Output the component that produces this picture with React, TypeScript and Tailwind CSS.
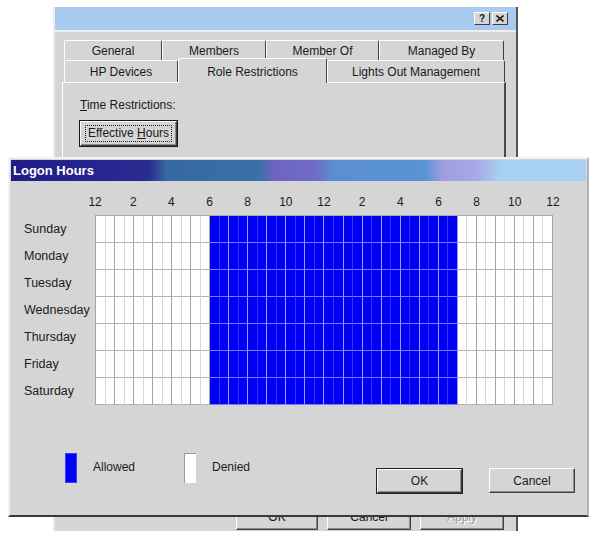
import clsx from "clsx";

const hourLabels = ["12", "2", "4", "6", "8", "10", "12", "2", "4", "6", "8", "10", "12"];
const days = ["Sunday", "Monday", "Tuesday", "Wednesday", "Thursday", "Friday", "Saturday"];

// half-hour slots; 6:00 .. 19:00 are allowed
const isAllowed = (col: number) => col >= 12 && col < 38;

function cellClass(col: number) {
    const hourEnd = col % 2 === 1;
    if (isAllowed(col)) {
        return clsx(
            "h-[27px] bg-[#0000f4] border-b border-r border-b-[#7c7cff]",
            hourEnd ? "border-r-[#9a9aff]" : "border-r-[#3434ff]"
        );
    }
    return clsx(
        "h-[27px] bg-white border-b border-r border-b-[#b2b2b2]",
        hourEnd ? "border-r-[#a6a6a6]" : "border-r-[#d6d6d6]"
    );
}

function Button({children, className, isDefault, disabled}: {
    children: React.ReactNode;
    className?: string;
    isDefault?: boolean;
    disabled?: boolean;
}) {
    return (
        <div className={clsx("bg-[#d5d5d5]", isDefault && "border border-[#202020]", className)}>
            <div className="w-full h-full flex items-center justify-center border border-t-white border-l-white border-r-[#404040] border-b-[#404040] shadow-[inset_-1px_-1px_0_#8a8a8a]">
                <span className={clsx("text-[12px] leading-[14px]", disabled ? "text-[#9a9a9a] [text-shadow:1px_1px_0_#ffffff]" : "text-[#1a1a1a]")}>
                    {children}
                </span>
            </div>
        </div>
    );
}

function Tab({label, width, height, className}: { label: string; width: string; height: string; className?: string }) {
    return (
        <div className={clsx(width, height, "flex items-center justify-center bg-[#d5d5d5] border-t border-l border-t-white border-l-white border-r border-r-[#404040] rounded-tl-[2px] rounded-tr-[2px] text-[12px] text-[#1a1a1a]", className)}>
            {label}
        </div>
    );
}

function BackDialog() {
    return (
        <div className="absolute left-[53px] top-[7px] w-[465px] h-[524px] overflow-hidden bg-[#d5d5d5] border-l-2 border-l-[#ececec] border-r-2 border-r-[#555555] flex flex-col">
            <div className="h-[23px] bg-[#a8caef] flex items-center justify-end pr-[8px] gap-[2px]">
                <div className="w-[16px] h-[13px] bg-[#d5d5d5] border border-t-white border-l-white border-r-[#404040] border-b-[#404040] flex items-center justify-center text-[10px] font-bold leading-none text-[#202020]">?</div>
                <div className="w-[16px] h-[13px] bg-[#d5d5d5] border border-t-white border-l-white border-r-[#404040] border-b-[#404040] flex items-center justify-center">
                    <svg width="8" height="7" viewBox="0 0 8 7">
                        <path d="M0.5 0.5 L7.5 6.5 M7.5 0.5 L0.5 6.5" stroke="#202020" strokeWidth="1.6"/>
                    </svg>
                </div>
            </div>
            <div className="h-[2px] bg-[#efefef]"/>
            <div className="flex-1 flex flex-col pl-[7px] pr-[10px] pt-[8px]">
                <div className="flex h-[20px] ml-[2px]">
                    <Tab label="General" width="w-[98px]" height="h-[20px]"/>
                    <Tab label="Members" width="w-[104px]" height="h-[20px]"/>
                    <Tab label="Member Of" width="w-[113px]" height="h-[20px]"/>
                    <Tab label="Managed By" width="w-[125px]" height="h-[20px]"/>
                </div>
                <div className="flex items-end h-[22px] ml-[2px]">
                    <Tab label="HP Devices" width="w-[114px]" height="h-[22px]"/>
                    <div className="w-[149px] h-[25px] mb-[-1px] relative z-10 flex justify-center pt-[4px] bg-[#d5d5d5] border-t border-l border-t-white border-l-white border-r border-r-[#404040] rounded-tl-[2px] rounded-tr-[2px] text-[12px] text-[#1a1a1a]">
                        Role Restrictions
                    </div>
                    <Tab label="Lights Out Management" width="w-[178px]" height="h-[22px]"/>
                </div>
                <div className="flex-1 border-t border-l border-t-white border-l-white border-r-2 border-r-[#4a4a4a] pl-[17px] pt-[15px]">
                    <div className="text-[12px] leading-[14px] text-[#1a1a1a]">
                        <span className="underline">T</span>ime Restrictions:
                    </div>
                    <div className="mt-[8px] ml-[-1px] w-[99px] h-[27px] border border-[#1a1a1a]">
                        <div className="w-full h-full flex items-center justify-center border border-t-white border-l-white border-r-[#404040] border-b-[#404040] shadow-[inset_-1px_-1px_0_#8a8a8a]">
                            <span className="border border-dotted border-[#1a1a1a] px-[2px] text-[12px] leading-[15px] text-[#1a1a1a]">
                                Effective <span className="underline">H</span>ours
                            </span>
                        </div>
                    </div>
                </div>
            </div>
            <div className="flex h-[27px] mt-[6px] pl-[181px] gap-[9px]">
                <Button className="w-[82px] h-[26px] shrink-0">OK</Button>
                <Button className="w-[84px] h-[26px] shrink-0">Cancel</Button>
                <Button className="w-[84px] h-[26px] shrink-0" disabled>Apply</Button>
            </div>
        </div>
    );
}

function LogonHours() {
    return (
        <div className="absolute left-[8px] top-[157px] w-[581px] h-[360px] bg-[#d5d5d5] border-2 border-t-[#f2f2f2] border-l-[#f2f2f2] border-r-[#b4b4b4] border-b-[#3a3a3a] flex flex-col">
            <div className="mx-px mt-px h-[21px] flex items-center pl-[2px] bg-[linear-gradient(to_right,#1e1e86_0%,#2a2c92_24%,#3668a2_27%,#3a70a8_43%,#7064c0_46%,#6e6cc4_53%,#5a8ed2_56%,#5a92d6_72%,#9c9ee0_75%,#a8a8e6_81%,#a8d0f2_85%,#a8d0f2_100%)]">
                <span className="text-white font-bold text-[13px] leading-none">Logon Hours</span>
            </div>

            <div className="flex mt-[14px] h-[14px]">
                <div className="w-[66px] shrink-0"/>
                {hourLabels.map((h, i) => (
                    <div key={i} className="w-[38.17px] shrink-0 text-center text-[12px] leading-[14px] text-[#1a1a1a]">{h}</div>
                ))}
            </div>

            <div className="flex mt-[6px]">
                <div className="w-[85px] shrink-0 pl-[14px] pt-px flex flex-col">
                    {days.map((d) => (
                        <div key={d} className="h-[27px] flex items-center text-[12.5px] text-[#1a1a1a]">{d}</div>
                    ))}
                </div>
                <div className="w-[458px] border-l border-t border-l-[#a6a6a6] border-t-[#a6a6a6] grid grid-cols-[repeat(48,minmax(0,1fr))]">
                    {days.map((d) =>
                        Array.from({length: 48}, (_, col) => (
                            <div key={d + col} className={cellClass(col)}/>
                        ))
                    )}
                </div>
            </div>

            <div className="flex items-start mt-[48px] pl-[55px] pr-[12px]">
                <div className="w-[12px] h-[30px] shrink-0 bg-[#0000f4] border border-[#3c3cff]"/>
                <div className="w-[107px] shrink-0 pl-[16px] pt-[7px] text-[12px] leading-[14px] text-[#1a1a1a]">Allowed</div>
                <div className="w-[12px] h-[30px] shrink-0 bg-white border-l border-t border-l-[#9a9a9a] border-t-[#9a9a9a]"/>
                <div className="pl-[16px] pt-[7px] text-[12px] leading-[14px] text-[#1a1a1a]">Denied</div>
                <div className="ml-auto mt-[15px] flex gap-[26px]">
                    <Button className="w-[87px] h-[26px]" isDefault>OK</Button>
                    <Button className="w-[86px] h-[25px]">Cancel</Button>
                </div>
            </div>
        </div>
    );
}

export default function App() {
    return (
        <div className="relative w-[590px] h-[537px] overflow-hidden bg-white font-['Liberation_Sans',Arial,sans-serif]">
            <BackDialog/>
            <LogonHours/>
        </div>
    );
}
